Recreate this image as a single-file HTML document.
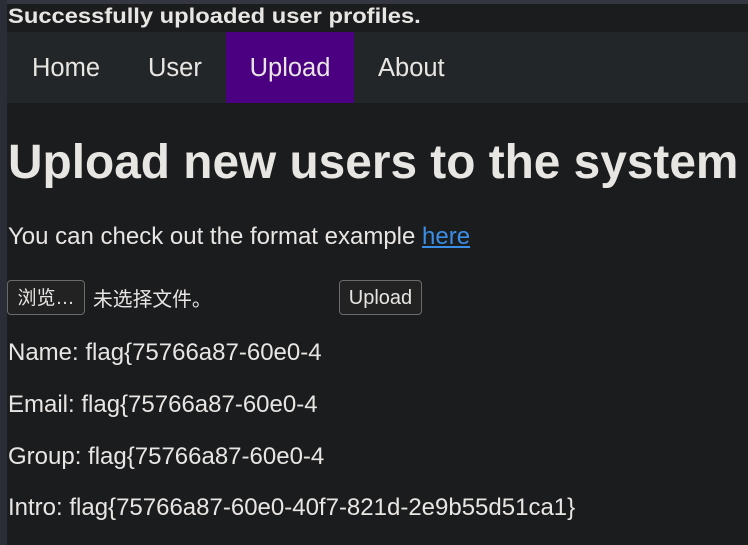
<!DOCTYPE html>
<html><head><meta charset="utf-8"><style>
html,body{margin:0;padding:0;width:748px;height:545px;overflow:hidden;background:#1b1c1e;font-family:"Liberation Sans","Noto Sans CJK SC",sans-serif;color:#e8e6e3}
.l{position:absolute;left:0;top:0;width:7px;height:545px;background:#2a2d35}
.t{position:absolute;left:0;top:0;width:748px;height:4px;background:#34373f}
.a{position:absolute;white-space:nowrap}
.nav{position:absolute;left:7px;top:32px;width:741px;height:71px;background:#232628}
.nav span{position:absolute;top:0;height:71px;line-height:73px;font-size:25.5px;color:#e8e6e3}
.btn{position:absolute;border:1px solid #6b6b6b;border-radius:4px;background:#222;font-size:20px;line-height:35px;height:35px;text-align:center;box-sizing:border-box}
</style></head><body>
<div class="t"></div><div class="l"></div>
<div class="a" style="left:8px;top:5px;font-size:21px;font-weight:bold;transform:scaleX(1.13);transform-origin:0 0">Successfully uploaded user profiles.</div>
<div class="nav">
<span style="left:25px">Home</span>
<span style="left:141px">User</span>
<span style="left:219px;width:128px;background:#4b0082;text-align:center">Upload</span>
<span style="left:371px">About</span>
</div>
<div class="a" style="left:8px;top:135px;font-size:47.8px;font-weight:bold">Upload new users to the system</div>
<div class="a" style="left:8px;top:223px;font-size:24px">You can check out the format example <span style="color:#3a8ee6;text-decoration:underline">here</span></div>
<div class="btn" style="left:7px;top:280px;width:78px;font-size:19px">浏览…</div>
<div class="a" style="left:93px;top:283px;font-size:19.8px">未选择文件。</div>
<div class="btn" style="left:339px;top:280px;width:83px">Upload</div>
<div class="a" style="left:8px;top:339px;font-size:24px">Name: flag{75766a87-60e0-4</div>
<div class="a" style="left:8px;top:391px;font-size:24px">Email: flag{75766a87-60e0-4</div>
<div class="a" style="left:8px;top:443px;font-size:24px">Group: flag{75766a87-60e0-4</div>
<div class="a" style="left:8px;top:494px;font-size:24px">Intro: flag{75766a87-60e0-40f7-821d-2e9b55d51ca1}</div>
</body></html>
